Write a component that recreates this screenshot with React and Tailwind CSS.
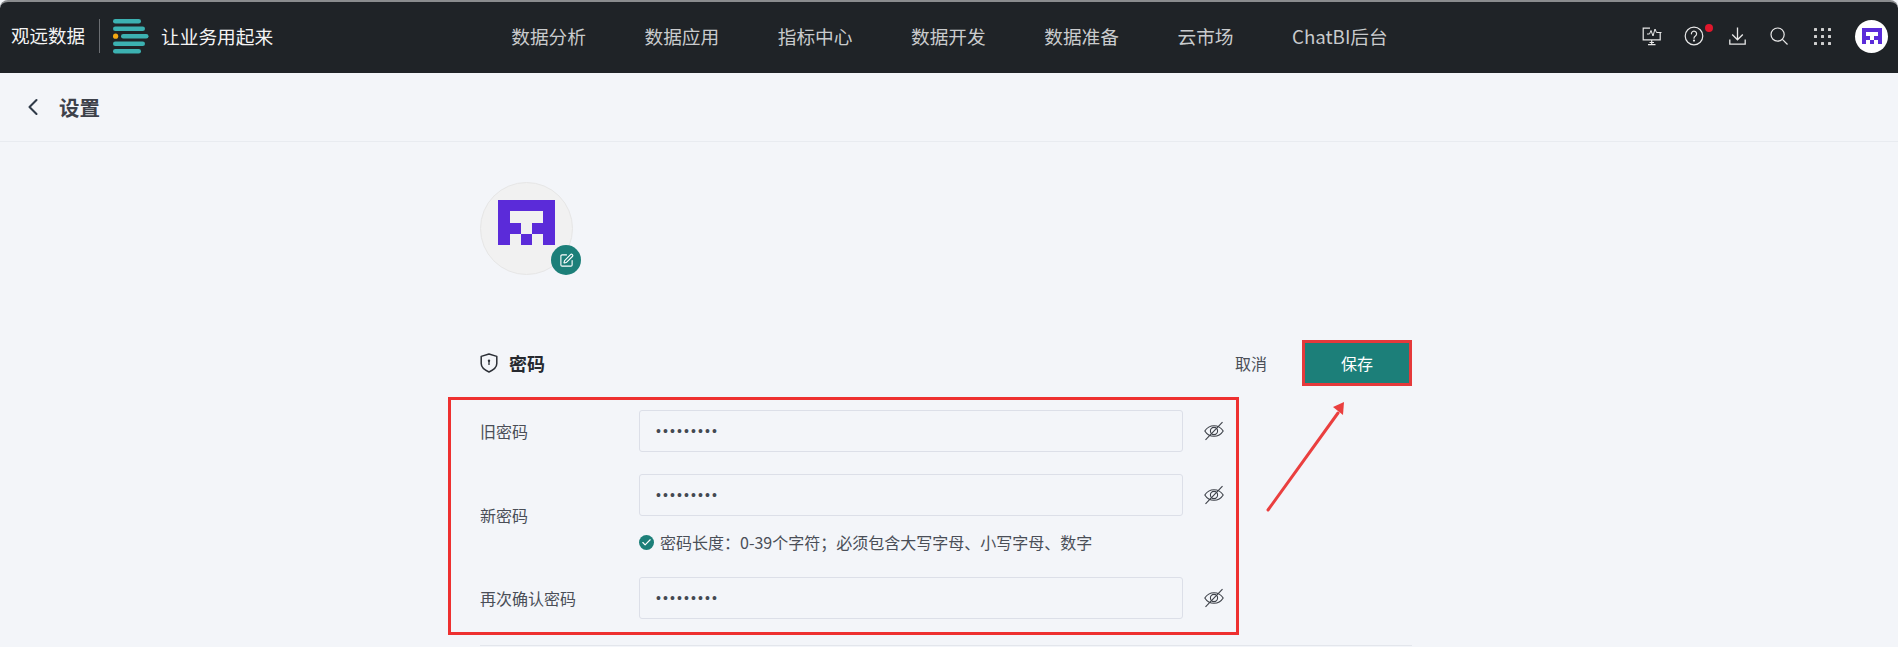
import React from "react";
import { ChevronLeft, SquarePen, Check } from "lucide-react";

const NAV_ITEMS = ["数据分析", "数据应用", "指标中心", "数据开发", "数据准备", "云市场", "ChatBI后台"];

const FONT = "font-['Noto_Sans_CJK_SC','Liberation_Sans',sans-serif]";

const BrandMark = () => (
  <svg width="36" height="35" viewBox="0 0 36 35" className="block">
    <g fill="#3cb1b1">
      <rect x="0" y="0" width="28" height="4.5" rx="2.25" />
      <rect x="0" y="7.5" width="32" height="4.5" rx="2.25" />
      <rect x="8" y="15" width="27.5" height="4.5" rx="2.25" />
      <rect x="0" y="22.5" width="32" height="4.5" rx="2.25" />
      <rect x="0" y="30" width="28" height="4.5" rx="2.25" />
    </g>
    <circle cx="2.6" cy="17.2" r="2.6" fill="#f3a712" />
  </svg>
);

// purple pixel logo, 5 columns x 4 rows
const PixelLogo = ({ className }) => (
  <svg viewBox="0 0 5 4" className={className} shapeRendering="crispEdges">
    <path fill="#5b2bd9" d="M0 0h5v1H0zM0 1h1v3H0zM4 1h1v3H4zM1 2h1v1H1zM3 2h1v1H3zM2 3h1v1H2z" />
  </svg>
);

const MonitorIcon = () => (
  <svg width="20" height="19" viewBox="0 0 20 19" fill="none" stroke="#e8e8e8" strokeWidth="1.2">
    <path d="M8 1.200H1.200v11.600h17V6" />
    <path d="M5 7h2.500L9 3.500l2 5.500 2-7 1.500 3.500H19.500" strokeWidth="1" />
    <path d="M9.700 13v4M6 17.600h7.500M7.500 15.500h4.500" />
  </svg>
);

const HelpIcon = () => (
  <svg width="20" height="20" viewBox="0 0 20 20" fill="none" stroke="#e8e8e8" strokeWidth="1.2">
    <circle cx="10" cy="10" r="8.800" />
    <path d="M7.400 7.800a2.600 2.600 0 1 1 4 2.200c-.9.600-1.400 1-1.400 2.200" strokeLinecap="round" />
    <circle cx="10" cy="14.600" r=".5" fill="#e8e8e8" />
  </svg>
);

const DownloadIcon = () => (
  <svg width="17" height="18" viewBox="0 0 17 18" fill="none" stroke="#e8e8e8" strokeWidth="1.3">
    <path d="M8.500 0.500v12M3.200 7.500l5.300 5.300 5.300-5.300" />
    <path d="M0.800 12.500v4.700h15.400v-4.700" />
  </svg>
);

const SearchIcon = () => (
  <svg width="18" height="18" viewBox="0 0 18 18" fill="none" stroke="#e8e8e8" strokeWidth="1.2">
    <circle cx="7.600" cy="7.600" r="6.600" />
    <path d="M12.400 12.400L17.500 17.500" />
  </svg>
);

const GridIcon = () => (
  <svg width="17" height="17" viewBox="0 0 17 17" fill="#cfcfcf">
    {[0, 7, 14].map((y) =>
      [0, 7, 14].map((x) => <rect key={`${x}-${y}`} x={x} y={y} width="3" height="3" rx="0.5" />)
    )}
  </svg>
);

const ShieldIcon = () => (
  <svg width="18" height="20" viewBox="0 0 18 20" fill="none" stroke="#2b2f36" strokeWidth="1.5">
    <path d="M9 1l7.800 2.400v7.200c0 3.600-3.400 6.500-7.800 8.400C4.600 17.100 1.200 14.200 1.200 10.600V3.400z" strokeLinejoin="round" />
    <circle cx="9" cy="7.800" r="1.200" fill="#2b2f36" stroke="none" />
    <path d="M9 8v4" strokeWidth="1.300" />
  </svg>
);

const EyeOffIcon = () => (
  <svg width="20" height="20" viewBox="0 0 20 20" fill="none" stroke="#3c4048" strokeWidth="1.1">
    <path d="M0.800 10C3 6.500 6.300 4.700 10 4.700s7 1.800 9.200 5.300c-2.200 3.500-5.500 5.300-9.200 5.300S3 13.500 0.800 10z" />
    <circle cx="10" cy="10" r="3.600" />
    <path d="M1.500 18.800L18.500 1.200" />
  </svg>
);

const PasswordInput = () => (
  <div className="flex items-center gap-[21px]">
    <input
      type="password"
      defaultValue="123456789"
      readOnly
      className="h-[42px] w-[544px] rounded-[3px] border border-[#dcdfe8] bg-[#f3f5f9] pl-[16px] font-['Liberation_Sans',sans-serif] text-[14px] tracking-[2.1px] text-[#444852] outline-none"
    />
    <EyeOffIcon />
  </div>
);

const FormRow = ({ label, children }) => (
  <div className="flex items-center">
    <div className="w-[159px] text-[16px] text-[#4a4e57]">{label}</div>
    <div>{children}</div>
  </div>
);

const App = () => {
  return (
    <div className={`relative h-[647px] w-[1898px] overflow-hidden bg-[#f3f5f9] ${FONT}`}>
      <header className="flex h-[73px] items-center rounded-t-lg border-t-2 border-[#8a8c8e] bg-[#1f2327] pb-[3px] text-white">
        <div className="flex flex-1 items-center pl-[11px]">
          <span className="text-[18.500px] text-[#f4f4f4]">观远数据</span>
          <span className="ml-[14px] h-[34px] w-px bg-[#6b6e72]" />
          <span className="ml-[13px]">
            <BrandMark />
          </span>
          <span className="ml-[12px] text-[18.700px] text-[#f4f4f4]">让业务用起来</span>
        </div>

        <nav className="flex items-center gap-[58.500px] text-[18.700px] text-[#c9cbcd]">
          {NAV_ITEMS.map((item) => (
            <span key={item}>{item}</span>
          ))}
        </nav>

        <div className="flex flex-1 items-center justify-end pr-[10px]">
          <MonitorIcon />
          <span className="relative ml-[22px] flex">
            <HelpIcon />
            <span className="absolute -right-[9px] -top-[2px] h-[8px] w-[8px] rounded-full bg-[#e0172c]" />
          </span>
          <span className="ml-[25px] flex">
            <DownloadIcon />
          </span>
          <span className="ml-[24px] flex">
            <SearchIcon />
          </span>
          <span className="ml-[26px] flex">
            <GridIcon />
          </span>
          <span className="ml-[24px] flex h-[33px] w-[33px] items-center justify-center rounded-full bg-white">
            <PixelLogo className="h-[16px] w-[20px]" />
          </span>
        </div>
      </header>

      <div className="flex h-[69px] items-center gap-[12px] border-b border-[#e8ebf0] pl-[19px]">
        <ChevronLeft size={28} strokeWidth={1.8} className="text-[#2f3a48]" />
        <h1 className="text-[20.500px] font-bold text-[#3d414a]">设置</h1>
      </div>

      <main className="ml-[480px] w-[932px]">
        <div className="relative mt-[40px] h-[93px] w-[93px] rounded-full border border-[#e6e6e6] bg-[#f1f1f1]">
          <PixelLogo className="absolute left-[17px] top-[17px] h-[45px] w-[57px]" />
          <span className="absolute -bottom-[1px] -right-[9px] flex h-[30px] w-[30px] items-center justify-center rounded-full bg-[#1c7f79]">
            <SquarePen size={15} strokeWidth={1.8} className="text-white" />
          </span>
        </div>

        <div className="mt-[65px] flex h-[46px] items-center">
          <ShieldIcon />
          <h2 className="ml-[11px] text-[18px] font-bold text-[#26292f]">密码</h2>
          <span className="ml-auto text-[16px] text-[#4a4e57]">取消</span>
          <button className="ml-[35px] h-[46px] w-[110px] border-[3px] border-[#e5393b] bg-[#1c7f79] text-[16px] text-white">
            保存
          </button>
        </div>

        <section className="-ml-[32px] mt-[11px] flex w-[791px] flex-col gap-[22px] border-[3px] border-[#ee3030] pb-[13px] pl-[29px] pt-[10px]">
          <FormRow label="旧密码">
            <PasswordInput />
          </FormRow>
          <FormRow label="新密码">
            <PasswordInput />
            <div className="mb-[1px] mt-[14px] flex h-[24px] items-center gap-[6px] text-[16px] text-[#4a4e57]">
              <span className="flex h-[15px] w-[15px] items-center justify-center rounded-full bg-[#1c7f79]">
                <Check size={11} strokeWidth={2.500} className="text-white" />
              </span>
              <span>密码长度：0-39个字符；必须包含大写字母、小写字母、数字</span>
            </div>
          </FormRow>
          <FormRow label="再次确认密码">
            <PasswordInput />
          </FormRow>
        </section>

        <div className="mt-[10px] border-t border-[#e3e6ec]" />
      </main>

      {/* annotation arrow, sits on top of the page */}
      <svg className="pointer-events-none absolute left-[1260px] top-[395px]" width="90" height="120" viewBox="0 0 90 120">
        <path d="M8 115L78 18" stroke="#ea3f3f" strokeWidth="3" strokeLinecap="round" />
        <path d="M84 7L73 12L83 20z" fill="#ea3f3f" />
      </svg>
    </div>
  );
};

export default App;
